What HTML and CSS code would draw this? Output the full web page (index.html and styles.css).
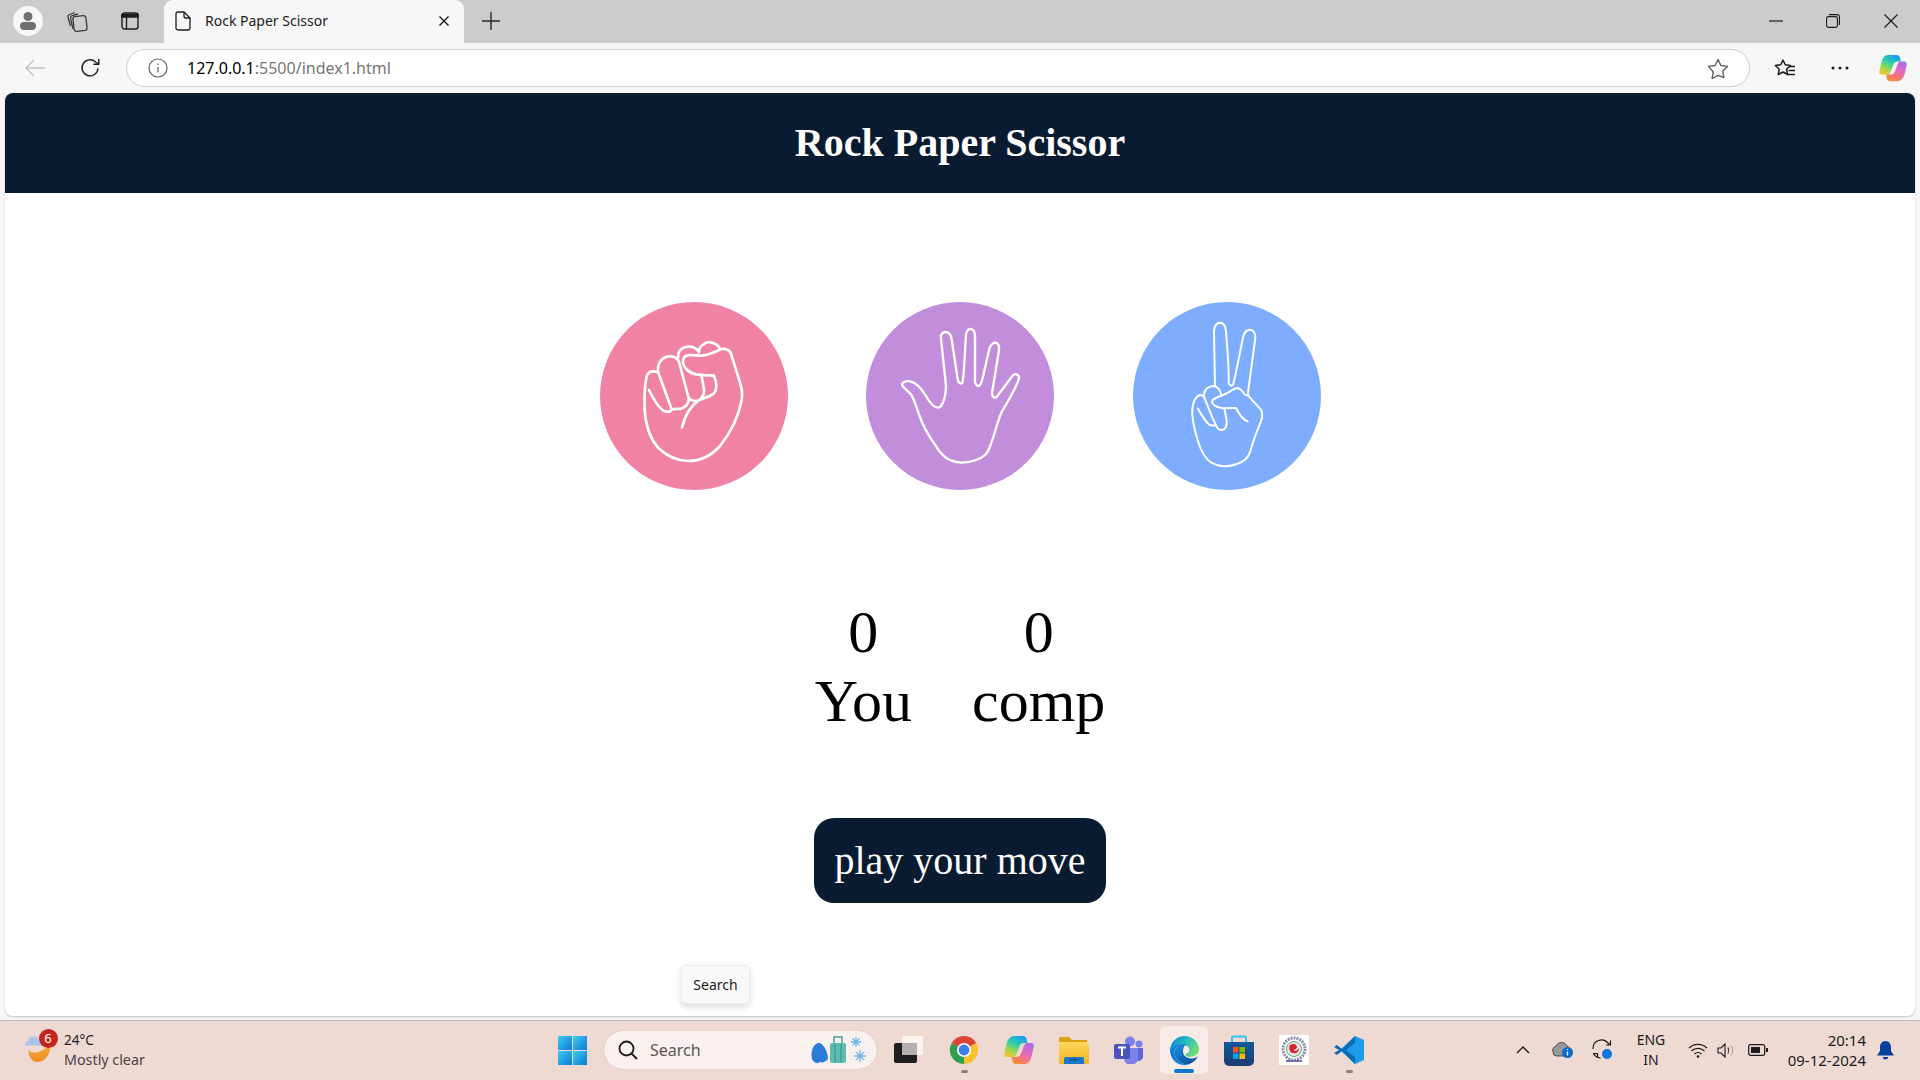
FILE: index.html
```html
<!DOCTYPE html>
<html lang="en">
<head>
<meta charset="utf-8">
<title>Rock Paper Scissor</title>
<link rel="stylesheet" href="styles.css">
</head>
<body>
<svg class="defs" width="0" height="0" aria-hidden="true">
  <defs>
    <linearGradient id="copA" x1=".7" y1="0" x2=".2" y2="1"><stop offset="0" stop-color="#1a9cf2"/><stop offset=".4" stop-color="#2fd0a8"/><stop offset=".7" stop-color="#9ad84c"/><stop offset="1" stop-color="#f7c52e"/></linearGradient>
    <linearGradient id="copB" x1=".8" y1="0" x2=".3" y2="1"><stop offset="0" stop-color="#a56cec"/><stop offset=".5" stop-color="#ec6ab4"/><stop offset="1" stop-color="#f78a38"/></linearGradient>
    <linearGradient id="edgeA" x1="0" y1=".3" x2="1" y2=".7"><stop offset="0" stop-color="#0c86d0"/><stop offset=".5" stop-color="#2cc0bc"/><stop offset="1" stop-color="#7fe06a"/></linearGradient>
    <linearGradient id="edgeB" x1="0" y1="0" x2=".8" y2="1"><stop offset="0" stop-color="#1590e0"/><stop offset="1" stop-color="#0b4f9c"/></linearGradient>
    <linearGradient id="folder" x1="0" y1="0" x2="0" y2="1"><stop offset="0" stop-color="#fbd85e"/><stop offset="1" stop-color="#f5b51e"/></linearGradient>
    <linearGradient id="store" x1="0" y1="0" x2="0" y2="1"><stop offset="0" stop-color="#0e5a9c"/><stop offset="1" stop-color="#1d3d6e"/></linearGradient>
    <linearGradient id="win" x1="0" y1="0" x2="1" y2="1"><stop offset="0" stop-color="#3fcbf5"/><stop offset="1" stop-color="#0a78d4"/></linearGradient>
    <linearGradient id="moon" x1="0" y1="0" x2="0" y2="1"><stop offset="0" stop-color="#f7b52c"/><stop offset="1" stop-color="#ee8a2a"/></linearGradient>
    <symbol id="copilot" viewBox="0 0 32 32">
      <path d="M11 1h9c2 0 3.500 1 4 3l1 4.500h-3.500c-2.500 0-4 1-5 3.500L13 21c-.8 2-2 2.500-4 2.500H3c-2 0-3-1.500-2.700-3.500L2.500 10c1-5 4-9 8.500-9z" fill="url(#copA)"/>
      <path d="M21 31h-8c-2 0-3.500-1-4-3l-1-4.500h5c2.500 0 4-1 5-3.500L21.500 11c.8-2 2-2.500 4-2.500H29c2 0 3 1.500 2.700 3.500L29.500 22c-1 5-4 9-8.500 9z" fill="url(#copB)"/>
    </symbol>
  </defs>
</svg>

<div class="window">
  <div class="tabstrip">
    <div class="cell"><span class="avatar"><svg width="18" height="20" viewBox="0 0 18 20"><circle cx="9" cy="5.500" r="4.500" fill="#6f6f6f"/><rect x="1" y="11" width="16" height="8" rx="4" fill="#6f6f6f"/></svg></span></div>
    <div class="cell"><svg width="22" height="22" viewBox="0 0 22 22" fill="none" stroke="#3a3a3a" stroke-width="1.300"><path d="M4.500 16 2 7.500C1.600 6 2.300 5 3.800 4.500L9 2.500"/><path d="M7 19 4.600 8.500C4.200 7 5 6 6.500 5.500L12 4"/><rect x="7.500" y="6" width="13" height="15" rx="2.500" transform="rotate(-7 14 13.500)"/></svg></div>
    <div class="cell"><svg width="18" height="18" viewBox="0 0 18 18" fill="none" stroke="#1c1c1c" stroke-width="1.400"><rect x="1" y="1" width="16" height="16" rx="2.500"/><path d="M5.500 5v12"/><path d="M1 2.500h16v2.500H1z" fill="#1c1c1c"/></svg></div>
    <div class="tab">
      <svg width="16" height="20" viewBox="0 0 16 20" fill="none" stroke="#1c1c1c" stroke-width="1.300"><path d="M1 3a2 2 0 0 1 2-2h6l6 6v10a2 2 0 0 1-2 2H3a2 2 0 0 1-2-2z"/><path d="M9 1v4a2 2 0 0 0 2 2h4"/></svg>
      <span class="tab-title">Rock Paper Scissor</span>
      <svg class="tab-close" width="10" height="10" viewBox="0 0 10 10" stroke="#1c1c1c" stroke-width="1.400"><path d="M.5.500l9 9M9.500.500l-9 9"/></svg>
    </div>
    <div class="cell"><svg width="18" height="18" viewBox="0 0 18 18" stroke="#2a2a2a" stroke-width="1.400"><path d="M9 0v18M0 9h18"/></svg></div>
    <div class="strip-fill"></div>
    <div class="cell"><svg width="14" height="2" viewBox="0 0 14 2" stroke="#1c1c1c" stroke-width="1.200"><path d="M0 1h14"/></svg></div>
    <div class="cell"><svg width="14" height="14" viewBox="0 0 14 14" fill="none" stroke="#1c1c1c" stroke-width="1.100"><rect x=".6" y="2.600" width="10.800" height="10.800" rx="1.800"/><path d="M3 .6h8.200a2.200 2.200 0 0 1 2.200 2.200V11"/></svg></div>
    <div class="cell"><svg width="14" height="14" viewBox="0 0 14 14" stroke="#1c1c1c" stroke-width="1.200"><path d="M.5.500l13 13M13.500.500l-13 13"/></svg></div>
  </div>

  <div class="toolbar">
    <div class="cell"><svg width="20" height="18" viewBox="0 0 20 18" fill="none" stroke="#c4c4c4" stroke-width="1.400"><path d="M20 9H1M9 1 1 9l8 8"/></svg></div>
    <div class="cell"><svg width="20" height="20" viewBox="0 0 20 20" fill="none" stroke="#1c1c1c" stroke-width="1.400"><path d="M18 10.500A8 8 0 1 1 15.500 4L18.500 6"/><path d="M18.800 1v5.300h-5.300"/></svg></div>
    <div class="address">
      <svg width="20" height="20" viewBox="0 0 20 20" fill="none" stroke="#5f5f5f" stroke-width="1.200"><circle cx="10" cy="10" r="9"/><path d="M10 9v5.500M10 5.500v1.500"/></svg>
      <span class="url"><span class="host">127.0.0.1</span>:5500/index1.html</span>
      <svg class="addr-star" width="22" height="21" viewBox="0 0 22 21" fill="none" stroke="#5f5f5f" stroke-width="1.400" stroke-linejoin="round"><path d="M11 1.500l2.900 6 6.600.9-4.800 4.600 1.200 6.500L11 17.300l-5.900 3.200 1.200-6.500L1.500 8.400l6.600-.9z"/></svg>
    </div>
    <div class="cell"><svg width="22" height="21" viewBox="0 0 22 21" fill="none" stroke="#1c1c1c" stroke-width="1.500" stroke-linejoin="round"><path d="M9 2l2.200 4.800 5.300.7-3.900 3.700 1 5.300L9 14l-4.700 2.500 1-5.300L1.300 7.500l5.300-.7z"/><path d="M15 8.500h6M14.500 12.500h6.500M14 16.500h7" stroke-width="1.300"/></svg></div>
    <div class="cell"><svg width="18" height="4" viewBox="0 0 18 4" fill="#1c1c1c"><circle cx="2" cy="2" r="1.500"/><circle cx="9" cy="2" r="1.500"/><circle cx="16" cy="2" r="1.500"/></svg></div>
    <div class="cell"><svg width="28" height="28" viewBox="0 0 32 32"><use href="#copilot"/></svg></div>
  </div>

  <div class="page">
    <header class="banner"><h1 class="banner-title">Rock Paper Scissor</h1></header>
    <main class="game">
      <div class="choices">
        <div class="choice choice-rock">
          <svg class="hand" viewBox="30 20 564 564" fill="none" stroke="#fff" stroke-width="8" stroke-linecap="round" stroke-linejoin="round">
            <path d="M205 232 C195 226 178 226 172 238 C165 260 163 310 164 345 C167 390 180 430 205 458 C232 484 262 496 295 497 C335 497 365 480 390 452 C420 415 445 365 455 315 C458 295 456 280 450 262 L424 178 C420 162 405 158 392 162 C370 172 350 184 325 181 C305 178 282 175 279 195 C278 215 295 232 318 237 C340 240 355 240 372 241 C380 262 382 282 372 294 C358 305 340 308 325 316 C305 330 285 360 276 396"/>
            <path d="M177 284 C190 310 205 338 222 347 C232 351 242 351 246 342"/>
            <path d="M205 232 L245 342 M205 232 C200 210 212 188 232 184 C248 181 262 186 267 200 L296 308 C298 325 285 340 265 341 C255 340 248 342 246 342"/>
            <path d="M265 185 C262 165 280 152 300 154 C312 155 322 160 327 172"/>
            <path d="M296 308 C305 318 322 320 330 312 C342 300 345 290 340 270 L334 238"/>
            <path d="M327 170 C325 155 345 138 362 141 C375 143 388 152 391 162"/>
          </svg>
        </div>
        <div class="choice choice-paper">
          <svg class="hand" viewBox="18 20 564 564" fill="none" stroke="#fff" stroke-width="7" stroke-linecap="round" stroke-linejoin="round">
            <path d="M128 272 C122 262 135 256 150 258 C170 262 185 280 198 302 C208 320 220 338 236 337 C250 332 258 300 258 272 L243 130 C241 115 250 109 258 110 C268 111 273 120 275 132 L293 252 C295 262 302 268 307 262 C312 250 315 160 318 118 C320 104 328 100 334 101 C343 103 345 112 345 125 L345 258 C346 268 352 274 358 271 C364 268 366 255 370 240 L388 160 C392 147 402 140 410 143 C417 147 418 155 417 165 L396 293 C396 305 403 310 410 305 L458 241 C465 232 478 238 477 248 C472 272 440 325 425 350 C412 378 405 415 392 448 C382 478 370 487 345 495 C320 503 295 505 272 495 C250 487 238 470 225 448 C205 420 192 400 180 365 C170 340 165 318 155 300 C148 290 135 282 128 272Z"/>
          </svg>
        </div>
        <div class="choice choice-scissors">
          <svg class="hand" viewBox="23 20 564 564" fill="none" stroke="#fff" stroke-width="6" stroke-linecap="round" stroke-linejoin="round">
            <path d="M269 272 C268 220 267 150 266 108 C266 90 276 82 285 82 C296 83 301 93 302 108 C305 155 311 200 310 262 C312 272 320 274 324 266 C335 220 345 165 354 122 C358 108 365 103 375 103 C385 105 391 115 390 128 L368 292"/>
            <path d="M368 298 C375 312 395 328 408 345 C414 358 410 372 403 388 C392 415 382 440 375 468 C368 490 355 498 335 506 C310 515 280 514 258 502 C235 488 225 462 217 435 C208 405 198 370 201 340 C203 320 210 305 223 299 C230 298 235 302 238 308 C248 335 258 362 272 390"/>
            <path d="M218 340 C228 358 240 378 252 388 C258 392 266 391 272 390"/>
            <path d="M236 298 C237 282 250 272 265 272 C280 274 285 285 289 301"/>
            <path d="M297 339 L304 375 C306 395 298 405 288 404 C280 404 275 400 272 390"/>
            <path d="M289 301 C305 296 320 282 335 278 C345 277 350 288 358 297 C365 304 368 298 368 298"/>
            <path d="M289 301 C275 305 262 310 260 318 C260 328 272 335 285 337 C300 340 315 338 332 338 C338 350 350 372 367 378"/>
          </svg>
        </div>
      </div>
      <div class="scores">
        <div class="score"><div>0</div><div>You</div></div>
        <div class="score"><div>0</div><div>comp</div></div>
      </div>
      <div class="message">play your move</div>
    </main>
    <div class="tooltip">Search</div>
  </div>

  <footer class="taskbar">
    <div class="weather">
      <span class="weather-icon">
        <svg width="32" height="34" viewBox="0 0 32 34"><path d="M3 17C8 22 18 20 25 10C27 18 22 29 12 29C7 29 4 24 3 17Z" fill="url(#moon)"/><path d="M0 12.500a3.500 3.500 0 0 1 3-4.500 6 6 0 0 1 11-1.500 4 4 0 0 1 7 6z" fill="#a9c6ee"/></svg>
        <span class="badge">6</span>
      </span>
      <span class="weather-text"><span class="temp">24°C</span><span class="cond">Mostly clear</span></span>
    </div>
    <div class="start"><svg width="29" height="29" viewBox="0 0 29 29"><g fill="url(#win)"><rect width="14" height="14" y="0" x="0"/><rect width="14" height="14" y="0" x="15"/><rect width="14" height="14" y="15" x="0"/><rect width="14" height="14" y="15" x="15"/></g></svg></div>
    <div class="search">
      <svg width="20" height="20" viewBox="0 0 20 20" fill="none" stroke="#1c1c1c" stroke-width="1.800"><circle cx="8.500" cy="8.500" r="7"/><path d="M13.500 13.500 19 19"/></svg>
      <span class="search-text">Search</span>
      <svg class="search-art" width="60" height="30" viewBox="0 0 60 30">
        <path d="M2 24c-2-10 3-17 8-16 5 3 8 10 8 16-3 3-5 4-8 3-3 2-6 1-8-3z" fill="#2b7bd8"/>
        <rect x="20" y="8" width="16" height="20" rx="2" fill="#5cbcb0"/><path d="M24 8V2h8v6" fill="none" stroke="#4a9e98" stroke-width="1.500"/><path d="M25 9v18M31 9v18" stroke="#3a8f88"/>
        <g stroke="#6ab8ec" stroke-width="1.300"><path d="M41 7h10M46 2v10M42.500 3.500l7 7M49.500 3.500l-7 7"/><path d="M44 21h12M50 15v12M46 17l8 8M54 17l-8 8"/></g>
      </svg>
    </div>
    <div class="apps">
      <div class="app"><svg width="30" height="30" viewBox="0 0 30 30"><rect x="0" y="8" width="23" height="20" rx="2" fill="#1e1e1e"/><rect x="8" y="1" width="21" height="19" rx="2" fill="#fbf4f1"/><rect x="8" y="8" width="15" height="12" fill="#b5b0ae"/></svg></div>
      <div class="app"><svg width="30" height="30" viewBox="0 0 32 32"><path d="M16 16 3 8.500A15 15 0 0 1 29 8.500z" fill="#db4437"/><path d="M16 16 29 8.500A15 15 0 0 1 16 31z" fill="#fbc02d"/><path d="M16 16 16 31A15 15 0 0 1 3 8.500z" fill="#2f9e4f"/><circle cx="16" cy="16" r="7.500" fill="#fff"/><circle cx="16" cy="16" r="5.800" fill="#3f7fec"/></svg><span class="dot"></span></div>
      <div class="app"><svg width="30" height="30" viewBox="0 0 32 32"><use href="#copilot"/></svg></div>
      <div class="app"><svg width="30" height="28" viewBox="0 0 30 28"><path d="M0 3a2 2 0 0 1 2-2h8l3 3h15v6H0z" fill="#dea00e"/><path d="M0 6h28a2 2 0 0 1 2 2v20H0z" fill="url(#folder)"/><path d="M5 28v-5a2 2 0 0 1 2-2h16a2 2 0 0 1 2 2v5z" fill="#1978c8"/><rect x="10" y="23" width="10" height="1.500" fill="#0c4f8e"/></svg></div>
      <div class="app"><svg width="30" height="28" viewBox="0 0 30 28"><circle cx="25" cy="8" r="3.500" fill="#7b83eb"/><circle cx="16" cy="5.500" r="5" fill="#7b83eb"/><path d="M21 12h8v9a5 5 0 0 1-8 3z" fill="#5d66d6"/><path d="M8 12h16v10a7 7 0 0 1-14 0z" fill="#7b83eb"/><rect y="8" width="16" height="15" rx="2" fill="#4b53bc"/><path d="M4 11.500h8M8 11.500V20" stroke="#fff" stroke-width="2" fill="none"/></svg></div>
      <div class="app app-active"><svg width="31" height="31" viewBox="0 0 32 32"><path d="M1 15C2 7 8 1 16 1c9 0 15 7 15 13.500 0 5-4 8-9 8-3 0-5-1-5-2.500 0-1 3-1 4-3.500 .8-3-2-6-6-6C9 10.500 5 12.500 1 15z" fill="url(#edgeA)"/><path d="M1 15c3-3 7-5.500 11-5.500C8 11.500 5.500 15 6 19c.5 6 6 11 13 11h2c-1.500.7-3.500 1-5 1C7 31 1 24 1 15z" fill="#0f7fd6"/><path d="M12 9.500C8 11.500 5.500 15 6 19c.5 6 6 11 13 11 1 0 2 0 3-.5 3.500-1.500 6.500-4 8-7.500-3 2.500-8 3-11 1.500-3-1.500-4.500-3.500-4.500-6.500 0-3 1-6 3-7.500-1-.3-3 0-5.500.5z" fill="url(#edgeB)"/></svg><span class="dot dot-active"></span></div>
      <div class="app"><svg width="30" height="31" viewBox="0 0 30 31"><path d="M8 7V3a1.500 1.500 0 0 1 1.500-1.500h11A1.500 1.500 0 0 1 22 3v4" fill="none" stroke="#2fc4e8" stroke-width="2"/><path d="M0 7h30v19a5 5 0 0 1-5 5H5a5 5 0 0 1-5-5z" fill="url(#store)"/><rect x="9" y="12" width="5.500" height="5.500" fill="#f25022"/><rect x="15.500" y="12" width="5.500" height="5.500" fill="#7fba00"/><rect x="9" y="18.500" width="5.500" height="5.500" fill="#00a4ef"/><rect x="15.500" y="18.500" width="5.500" height="5.500" fill="#ffb900"/></svg></div>
      <div class="app"><svg width="30" height="30" viewBox="0 0 30 30"><rect width="30" height="30" fill="#fff"/><circle cx="15" cy="14" r="11" fill="none" stroke="#8a8aa8" stroke-width="3" stroke-dasharray="2 1"/><circle cx="15" cy="14" r="7.500" fill="#e8e8e8" stroke="#5aa876"/><path d="M11 10c3-2 7-1 7 2 0 2-3 2-3 4 2 0 4-1 5-3 0 4-3 6-6 5-3 0-5-5-3-8z" fill="#d8262c"/><path d="M7 26h16" stroke="#7a6fb5" stroke-width="2"/></svg></div>
      <div class="app"><svg width="30" height="30" viewBox="0 0 30 30"><path d="M21 1 30 5v20l-9 4L6 15z" fill="#1e9be6"/><path d="M21 1 8 14l-5-4-3 2 5 3-5 3 3 2 5-4 13 13V22l-9-7 9-7z" fill="#0a6fb8"/></svg><span class="dot"></span></div>
    </div>
    <div class="tray">
      <div class="tray-cell tray-40"><svg width="14" height="8" viewBox="0 0 14 8" fill="none" stroke="#1c1c1c" stroke-width="1.400"><path d="M1 7l6-6 6 6"/></svg></div>
      <div class="tray-cell tray-40"><svg width="22" height="18" viewBox="0 0 22 18"><path d="M1 11a5 5 0 0 1 3-6 6 6 0 0 1 11 0 4 4 0 0 1 2 6l-4 4H5a4 4 0 0 1-4-4z" fill="#9a9a9a" stroke="#333" stroke-width=".800"/><circle cx="15.500" cy="11.500" r="5.500" fill="#0b6cc4"/><path d="M15.500 10.500v4M15.500 8v1" stroke="#fff" stroke-width="1.300"/></svg></div>
      <div class="tray-cell tray-40"><svg width="22" height="22" viewBox="0 0 22 22" fill="none" stroke="#1c1c1c" stroke-width="1.200"><path d="M1 10a8.500 8.500 0 0 1 15-6l2 2M18.500 1.500V6H14"/><path d="M1 14.500h4.500V19M1.500 15l2 2a8 8 0 0 0 5 2"/><circle cx="15" cy="15" r="5" fill="#0b78e0" stroke="none"/></svg></div>
      <div class="tray-cell tray-lang"><span>ENG</span><span>IN</span></div>
      <div class="tray-cell tray-wifi"><svg width="20" height="15" viewBox="0 0 20 15" fill="none" stroke="#1c1c1c" stroke-width="1.300"><path d="M1 5a13 13 0 0 1 18 0M3.500 8a9.500 9.500 0 0 1 13 0M6.500 11a5 5 0 0 1 7 0"/><circle cx="10" cy="13.500" r="1.300" fill="#1c1c1c" stroke="none"/></svg></div>
      <div class="tray-cell tray-vol"><svg width="18" height="15" viewBox="0 0 18 15" fill="none" stroke="#1c1c1c" stroke-width="1.100"><path d="M1 5v5h3l4 4V1L4 5z"/><path d="M11 4.500c1 2 1 4 0 6"/><path d="M14 2.500c2 3 2 7 0 10" stroke="#b5a8a4"/></svg></div>
      <div class="tray-cell tray-batt"><svg width="20" height="12" viewBox="0 0 20 12"><rect x=".7" y=".7" width="16" height="10.600" rx="2" fill="none" stroke="#1c1c1c" stroke-width="1.200"/><rect x="3" y="3" width="9" height="6" fill="#1c1c1c"/><rect x="18" y="4" width="2" height="4" fill="#1c1c1c"/></svg></div>
      <div class="tray-clock"><span>20:14</span><span>09-12-2024</span></div>
      <div class="tray-cell tray-bell"><svg width="17" height="19" viewBox="0 0 17 19"><path d="M8.500 0C5 0 3 3 3 6v4L0 14.500h17L14 10V6c0-3-2-6-5.500-6z" fill="#0a3f9c"/><path d="M6 16h5a2.500 2.500 0 0 1-5 0z" fill="#0a3f9c"/></svg></div>
    </div>
  </footer>
</div>
</body>
</html>
```
FILE: styles.css
```css
* { box-sizing: border-box; }
html, body { margin: 0; height: 100%; }
body { font-family: "Noto Sans", "Open Sans", sans-serif; background: #f7f7f7; color: #1c1c1c; overflow: hidden; }
.defs { position: absolute; }
svg { display: block; }

.window { height: 1080px; display: flex; flex-direction: column; }
.cell { display: flex; align-items: center; justify-content: center; }

.tabstrip {
  height: 43px; flex: none; background: #cccccc; padding: 0 0 1px 3px;
  display: grid; grid-template-columns: 50px 48px 58px 305px 54px 1fr 57px 58px 58px;
}
.avatar { width: 30px; height: 30px; border-radius: 50%; background: #f7f7f7; display: flex; align-items: center; justify-content: center; }
.tab {
  margin-left: 5px; margin-bottom: -1px; background: #f7f7f7; border-radius: 9px 9px 0 0;
  display: flex; align-items: center; padding: 0 15px 2px 11px; font-size: 14px;
}
.tab-title { margin-left: 14px; color: #1c1c1c; }
.tab-close { margin-left: auto; }

.toolbar {
  height: 50px; flex: none; padding: 6px 0 6px 8px;
  display: grid; grid-template-columns: 54px 56px 1fr 58px 52px 54px;
}
.address {
  margin-left: 8px; margin-right: 6px; background: #fff; border: 1px solid #cfcfcf; border-radius: 19px;
  display: flex; align-items: center; padding: 0 20px 0 21px; font-size: 16px;
}
.url { margin-left: 19px; padding-bottom: 1px; color: #767676; }
.host { color: #000; }
.addr-star { margin-left: auto; }

.page {
  flex: 1; margin: 0 5px 4px; background: #fff; border-radius: 8px; overflow: hidden; position: relative;
  box-shadow: 0 1px 2px rgba(0,0,0,.2); font-family: "Liberation Serif", serif; color: #000;
}
.banner { height: 100px; background: #081b31; display: flex; align-items: center; justify-content: center; padding-bottom: 2px; }
.banner-title { margin: 0; color: #fff; font-size: 40px; font-weight: 700; }
.game { display: flex; flex-direction: column; align-items: center; }
.choices { display: flex; gap: 78.500px; margin-top: 109px; }
.choice { width: 188px; height: 188px; border-radius: 50%; }
.choice-rock { background: #f082a3; }
.choice-paper { background: #c28ddb; }
.choice-scissors { background: #7fadfe; }
.hand { width: 188px; height: 188px; }
.scores { display: flex; gap: 60px; margin-top: 108px; font-size: 60px; text-align: center; }
.message {
  margin-top: 82px; background: #081b31; color: #fff; font-size: 40px; line-height: 45px; padding: 20px;
  border-radius: 20px;
}
.tooltip {
  position: absolute; left: 676px; top: 872px; width: 69px; height: 39px;
  display: flex; align-items: center; justify-content: center;
  background: #f9f9f9; border: 1px solid #ececec; border-radius: 5px; box-shadow: 0 3px 6px rgba(0,0,0,.14);
  font-family: "Noto Sans", sans-serif; font-size: 14px; color: #1c1c1c;
}

.taskbar {
  height: 60px; flex: none; background: #eed9d3; border-top: 1px solid #c9b8b3; padding-bottom: 1px;
  display: flex; align-items: stretch; font-size: 14.300px;
}
.weather { width: 540px; flex: none; display: flex; align-items: center; padding-left: 25px; }
.weather-icon { position: relative; width: 32px; height: 34px; margin-right: 7px; }
.badge {
  position: absolute; left: 13.500px; top: -4.500px; width: 19px; height: 19px; border-radius: 50%;
  background: #c4261d; color: #fff; font-size: 13px; line-height: 19px; text-align: center;
}
.weather-text { display: flex; flex-direction: column; line-height: 20px; }
.temp { font-size: 13.500px; }
.cond { color: #4b4440; }
.start { width: 64px; flex: none; display: flex; align-items: center; justify-content: center; }
.search {
  width: 273px; height: 38px; flex: none; align-self: center; background: #f8f1ee; border-radius: 19px;
  display: flex; align-items: center; padding-left: 14px; padding-right: 7px; box-shadow: 0 0 1px rgba(0,0,0,.25);
}
.search-text { margin-left: 12px; font-size: 16px; color: #5c5654; }
.search-art { margin-left: auto; }
.apps { margin-left: 4.500px; display: flex; }
.app { width: 55px; display: flex; align-items: center; justify-content: center; position: relative; }
.app-active::before {
  content: ""; position: absolute; left: 3.500px; right: 3.500px; top: 5px; bottom: 5px;
  background: #f6ebe7; border-radius: 5px;
}
.app-active svg { position: relative; }
.dot { position: absolute; left: 24px; bottom: 6px; width: 7px; height: 3px; border-radius: 2px; background: #8a817d; }
.dot-active { left: 17.500px; width: 20px; bottom: 6px; height: 4px; background: #0a78d4; }
.tray { margin-left: auto; padding-right: 16px; display: flex; }
.tray-cell { display: flex; align-items: center; justify-content: center; }
.tray-40 { width: 40px; }
.tray-lang { width: 56px; flex-direction: column; font-size: 14px; line-height: 20px; }
.tray-wifi { width: 38px; }
.tray-vol { width: 18px; }
.tray-batt { width: 46px; }
.tray-bell { width: 38px; }
.tray-clock { width: 85px; display: flex; flex-direction: column; justify-content: center; align-items: flex-end; font-size: 15px; line-height: 20px; }
```
